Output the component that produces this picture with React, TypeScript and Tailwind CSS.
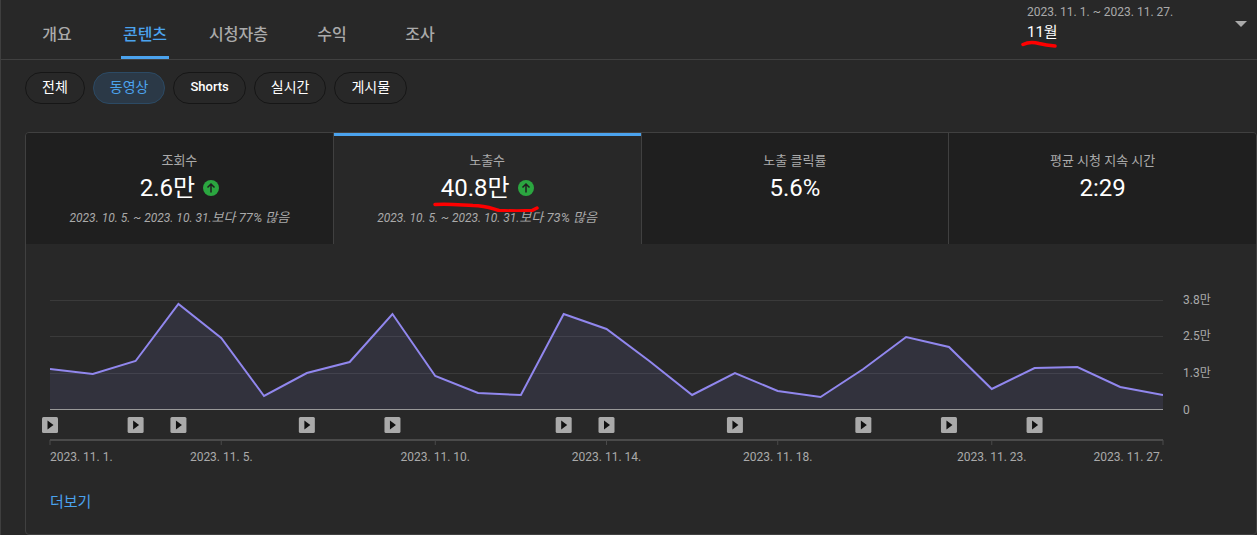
import clsx from 'clsx';

const TABS = ['개요', '콘텐츠', '시청자층', '수익', '조사'];
const CHIPS = ['전체', '동영상', 'Shorts', '실시간', '게시물'];

interface Metric {
  label: string;
  value: string;
  change?: string;
  marked?: boolean;
}

const PREVIOUS_PERIOD = '2023. 10. 5. ~ 2023. 10. 31.';

const METRICS: Metric[] = [
  { label: '조회수', value: '2.6만', change: '77% 많음' },
  { label: '노출수', value: '40.8만', change: '73% 많음', marked: true },
  { label: '노출 클릭률', value: '5.6%' },
  { label: '평균 시청 지속 시간', value: '2:29' },
];

// height above the baseline, one entry per day
const DAILY = [
  41, 36, 49, 106, 72, 14, 37, 48, 96, 34, 17, 15, 96, 81, 49, 15, 37, 19, 13, 41, 73, 63, 21, 42,
  43, 23, 15,
];
const UPLOADS = [0, 2, 3, 6, 8, 12, 13, 16, 19, 21, 23];
const DATES = [0, 4, 9, 13, 17, 22, 26];
const GRID = [
  { y: 10, label: '3.8만' },
  { y: 46, label: '2.5만' },
  { y: 83, label: '1.3만' },
];
const BASE = 120;
const LAST = DAILY.length - 1;

function dayX(day: number) {
  return `${(day / LAST) * 100}%`;
}

function UpBadge() {
  return (
    <svg viewBox="0 0 16 16" className="size-4 shrink-0">
      <circle cx="8" cy="8" r="8" fill="#2ba640" />
      <path d="M8 12.5V4.5M4.5 7.5L8 4L11.5 7.5" fill="none" stroke="#1f1f1f" strokeWidth="1.5" />
    </svg>
  );
}

function MetricTab({ metric, active }: { metric: Metric; active: boolean }) {
  return (
    <button
      role="tab"
      aria-selected={active}
      className={clsx(
        'flex h-[111px] flex-1 flex-col items-center border-l border-[#404040] pt-[19px] first:border-l-0',
        active ? 'bg-[#282828] shadow-[inset_0_3px_0_#4ba3ee]' : 'bg-[#1f1f1f]',
      )}
    >
      <span className="text-[13px] leading-[18px] text-[#aaa]">{metric.label}</span>
      <span className="relative flex items-center gap-2 text-[24px] leading-[36px] text-white">
        {metric.value}
        {metric.change && <UpBadge />}
        {metric.marked && (
          <svg viewBox="0 0 106 10" className="absolute top-8 -left-2 h-2.5 w-[106px]">
            <path
              d="M2 2.500C16 1.500 28 3 40 3.500C52 3.500 56 5.500 66 8.500C76 9 92 9 99 8.500L104 6"
              fill="none"
              stroke="#f00"
              strokeWidth="3.500"
              strokeLinecap="round"
              className="overflow-visible"
            />
          </svg>
        )}
      </span>
      {metric.change && (
        <span className="mt-[3px] text-[13px] leading-[18px] text-[#aaa] italic">
          <span className="text-[12px]">{PREVIOUS_PERIOD}</span>
          보다 {metric.change}
        </span>
      )}
    </button>
  );
}

function Chart() {
  const line = DAILY.map((v, i) => `${i},${BASE - v}`).join(' ');

  return (
    <svg className="block h-[180px] w-full overflow-visible text-[12px]" fill="#aaa">
      {GRID.map((g) => (
        <g key={g.label}>
          <line x1="0" x2="100%" y1={g.y + 0.5} y2={g.y + 0.5} stroke="#3a3a3a" />
          <text x="100%" dx="20" y={g.y + 4}>
            {g.label}
          </text>
        </g>
      ))}
      <text x="100%" dx="20" y={BASE + 4}>
        0
      </text>

      <svg viewBox={`0 0 ${LAST} ${BASE}`} width="100%" height={BASE} preserveAspectRatio="none">
        <polygon points={`0,${BASE} ${line} ${LAST},${BASE}`} fill="#8c8cf0" fillOpacity="0.11" />
        <polyline
          points={line}
          fill="none"
          stroke="#9187ee"
          strokeWidth="2"
          vectorEffect="non-scaling-stroke"
        />
      </svg>
      <line x1="0" x2="100%" y1={BASE - 0.5} y2={BASE - 0.5} stroke="#999" />

      {UPLOADS.map((day) => (
        <svg key={day} x={dayX(day)} y="127" className="overflow-visible">
          <rect x="-8" width="16" height="16" rx="1.500" fill="#aaa" />
          <path d="M-2.500 3.500V12.500L3.500 8Z" fill="#111" />
        </svg>
      ))}

      <line x1="0" x2="100%" y1="150" y2="150" stroke="#4a4a4a" strokeWidth="2" />
      {DATES.map((day) => (
        <g key={day}>
          <line x1={dayX(day)} x2={dayX(day)} y1="150" y2="155" stroke="#4a4a4a" />
          <text
            x={dayX(day)}
            y="171"
            textAnchor={day === 0 ? 'start' : day === LAST ? 'end' : 'middle'}
          >
            {`2023. 11. ${day + 1}.`}
          </text>
        </g>
      ))}
    </svg>
  );
}

export default function App() {
  return (
    <div className="min-h-screen border-l border-[#3f3f3f] bg-[#282828] font-['Roboto','Noto_Sans_CJK_KR',sans-serif]">
      <header className="flex h-[60px] items-end justify-between border-b border-[#404040] pl-8">
        <nav role="tablist" className="flex gap-10">
          {TABS.map((tab) => {
            const active = tab === '콘텐츠';
            return (
              <button
                key={tab}
                role="tab"
                aria-selected={active}
                className={clsx(
                  'h-12 min-w-12 border-b-[3px] pt-0.5 text-[16px] font-medium',
                  active ? 'border-[#4ba3ee] text-[#4ba3ee]' : 'border-transparent text-[#aaa]',
                )}
              >
                {tab}
              </button>
            );
          })}
        </nav>

        <button className="flex w-[240px] items-start justify-between self-start pr-2.5 pl-2.5 text-left">
          <span className="relative flex flex-col pt-1">
            <span className="text-[12px] leading-4 text-[#aaa]">2023. 11. 1. ~ 2023. 11. 27.</span>
            <span className="text-[15px] leading-6 text-white">11월</span>
            <svg viewBox="0 0 36 8" className="absolute top-10 -left-1.5 h-2 w-9">
              <path
                d="M2 4.500C8 1.500 13 2 18 3.500C24 5 28 5.500 34 6"
                fill="none"
                stroke="#f00"
                strokeWidth="3.500"
                strokeLinecap="round"
              />
            </svg>
          </span>
          <svg viewBox="0 0 12 6" className="mt-[21px] h-1.5 w-3">
            <path d="M0 0H12L6 6Z" fill="#aaa" />
          </svg>
        </button>
      </header>

      <main className="pt-3 pl-6">
        <div className="flex gap-2">
          {CHIPS.map((chip) => (
            <button
              key={chip}
              className={clsx(
                'h-8 rounded-full border px-4 pb-0.5',
                chip === 'Shorts' ? 'text-[13px] font-medium' : 'text-[14px]',
                chip === '동영상'
                  ? 'border-[#2c4a64] bg-[#2b3947] text-[#4ba3ee]'
                  : 'border-[#161616] text-white',
              )}
            >
              {chip}
            </button>
          ))}
        </div>

        <section className="mt-7 overflow-hidden rounded border border-[#404040]">
          <div role="tablist" className="flex">
            {METRICS.map((metric) => (
              <MetricTab key={metric.label} metric={metric} active={metric.label === '노출수'} />
            ))}
          </div>
          <div className="pt-[46px] pr-[93px] pb-5 pl-6">
            <Chart />
            <a href="#more" className="mt-5 inline-block text-[15px] leading-6 text-[#4ba3ee]">
              더보기
            </a>
          </div>
        </section>
      </main>
    </div>
  );
}
